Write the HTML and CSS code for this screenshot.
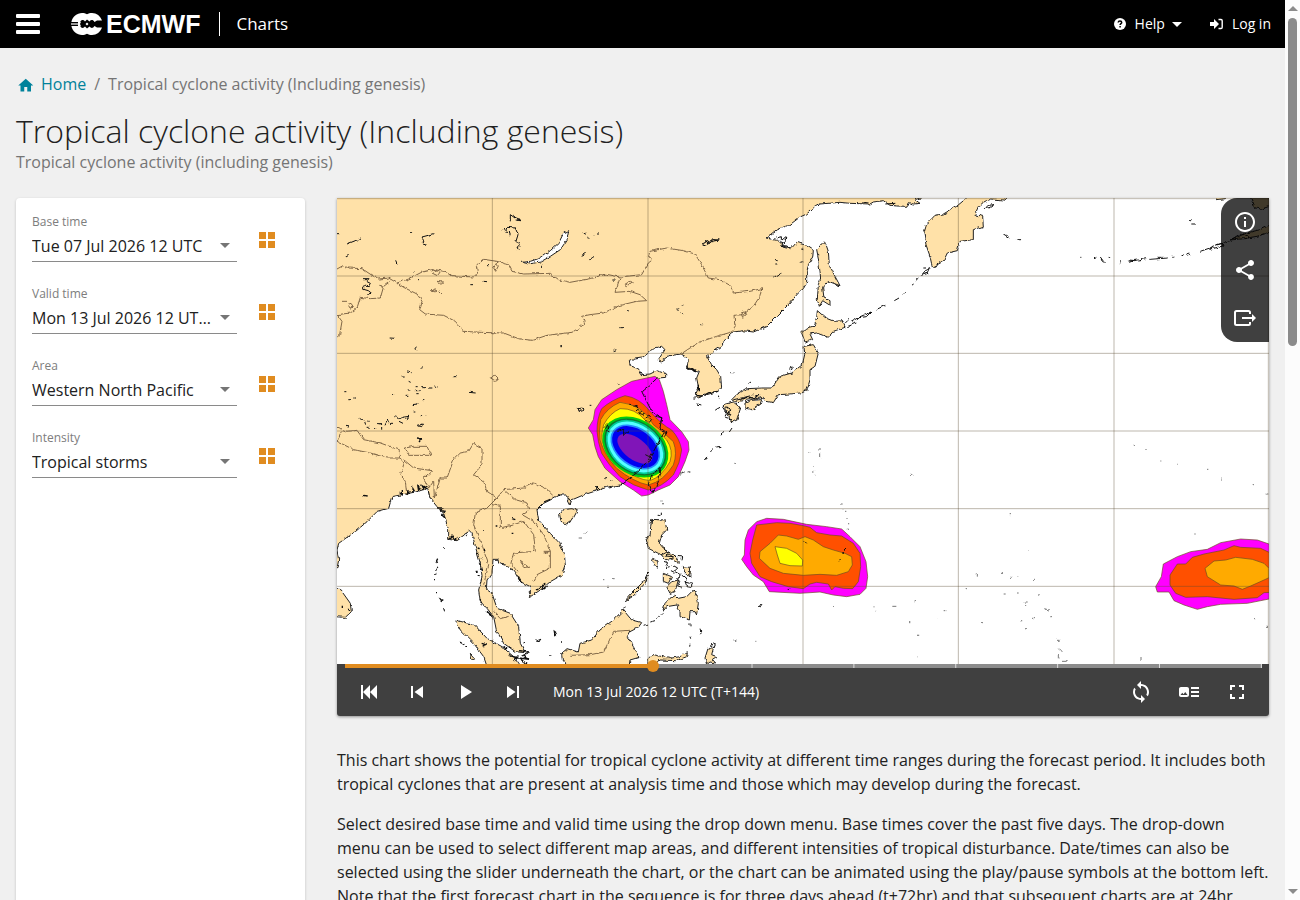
FILE: index.html
```html
<!DOCTYPE html>
<html lang="en">
<head>
  <meta charset="UTF-8">
  <meta name="viewport" content="width=device-width, initial-scale=1.0">
  <title>Tropical cyclone activity (Including genesis)</title>
  <link rel="stylesheet" href="styles.css">
</head>
<body>
  <div class="page">
    <header class="topbar">
      <button class="menu-button" type="button" aria-label="Menu"><span></span><span></span><span></span></button>
      <a class="logo" href="#">
        <svg width="32" height="22" viewBox="0 0 32 22" aria-hidden="true">
          <path fill="#fff" d="M11 0c2 0 3.500.4 5 1.200C17.500.4 19 0 21 0c4.600 0 8.500 3 10 7.500h-5L23.500 9c-1.500-2.500-3.500-2.500-5-.5L16 6.500l-2 2c-1.500-2-3.500-2-5 .5H.4C1.500 3.500 6 0 11 0zM11 22c2 0 3.500-.4 5-1.200 1.500.8 3 1.200 5 1.200 4.600 0 8.500-3 10-7.500h-5L23.500 13c-1.500 2.500-3.500 2.500-5 .5L16 15.500l-2-2c-1.500 2-3.500 2-5-.5H.4C1.500 18.500 6 22 11 22z"/>
          <path stroke="#fff" stroke-width="1.200" d="M0 11h9"/>
          <path fill="#fff" d="M14.500 11L16 9.500l1.500 1.500-1.500 1.500zM7 8.800h3l-1 2.200 1 2.200H7z"/>
        </svg>
        <span>ECMWF</span>
      </a>
      <a class="app-name" href="#">Charts</a>
      <nav class="user-nav">
        <button class="nav-item" type="button">
          <svg width="12" height="12" viewBox="0 0 12 12"><circle cx="6" cy="6" r="6" fill="#fff"/><path d="M4.200 4.500C4.300 2.600 7.700 2.600 7.700 4.500c0 1.200-1.600 1.200-1.600 2.500M6.100 8v1.500" fill="none" stroke="#000" stroke-width="1.500"/></svg>
          <span>Help</span>
          <i class="caret"></i>
        </button>
        <a class="nav-item" href="#">
          <svg width="13" height="12" viewBox="0 0 13 12"><path fill="#fff" d="M0 4h4V1l5 5-5 5V8H0z"/><path d="M8.500 1.500H11q1.200 0 1.200 1.200v6.600q0 1.200-1.200 1.200H8.500" fill="none" stroke="#fff" stroke-width="1.400"/></svg>
          <span>Log in</span>
        </a>
      </nav>
    </header>

    <main class="content">
      <nav class="breadcrumb">
        <a href="#"><svg width="18" height="18" viewBox="0 0 24 24"><path fill="currentColor" d="M11 22v-6h4v6h5v-8h3L13 5 3 14h3v8z"/></svg>Home</a>
        <span>/</span>
        <span>Tropical cyclone activity (Including genesis)</span>
      </nav>
      <h1>Tropical cyclone activity (Including genesis)</h1>
      <p class="subtitle">Tropical cyclone activity (including genesis)</p>

      <div class="columns">
        <form class="filters">
          <div class="filter">
            <div class="field">
              <label for="base">Base time</label>
              <select id="base"><option>Tue 07 Jul 2026 12 UTC</option></select>
            </div>
            <button class="grid-button" type="button" aria-label="All base times"><i></i><i></i><i></i><i></i></button>
          </div>
          <div class="filter">
            <div class="field">
              <label for="valid">Valid time</label>
              <select id="valid"><option>Mon 13 Jul 2026 12 UTC (T+144)</option></select>
            </div>
            <button class="grid-button" type="button" aria-label="All valid times"><i></i><i></i><i></i><i></i></button>
          </div>
          <div class="filter">
            <div class="field">
              <label for="area">Area</label>
              <select id="area"><option>Western North Pacific</option></select>
            </div>
            <button class="grid-button" type="button" aria-label="All areas"><i></i><i></i><i></i><i></i></button>
          </div>
          <div class="filter">
            <div class="field">
              <label for="intensity">Intensity</label>
              <select id="intensity"><option>Tropical storms</option></select>
            </div>
            <button class="grid-button" type="button" aria-label="All intensities"><i></i><i></i><i></i><i></i></button>
          </div>
        </form>

        <section class="main-column">
          <div class="player">
            <svg class="map" viewBox="0 0 2796 1398" role="img" aria-label="Western North Pacific tropical storm probability">
              <defs>
                <filter id="rough" x="0" y="0" width="100%" height="100%" color-interpolation-filters="sRGB">
                  <feTurbulence type="fractalNoise" baseFrequency="0.07" numOctaves="2" seed="4"/>
                  <feDisplacementMap in="SourceGraphic" scale="11" xChannelSelector="R" yChannelSelector="G"/>
                </filter>
              </defs>
              <rect width="2796" height="1398" fill="#fff"/>
              <g filter="url(#rough)">
              <!-- land -->
              <g class="land">
                <path d="M-20-20H1749V0L1734 5 1749 16 1729 18 1714 14 1709 25 1679 24 1659 22 1639 8 1609 12 1599 18 1539 16 1509 13 1449 18 1429 30 1409 48 1389 57 1359 80 1319 95 1287 120 1319 127 1339 145 1364 150 1379 133 1404 140 1419 150 1429 157 1427 180 1414 200 1409 225 1409 255 1399 272 1384 285 1354 320 1319 355 1289 385 1249 402 1219 398 1189 402 1164 425 1154 445 1129 462 1109 475 1124 500 1139 515 1151 535 1154 570 1144 580 1109 590 1084 600 1074 590 1084 565 1079 540 1087 520 1049 510 1054 485 1044 475 1032 468 999 473 969 492 964 485 984 455 974 445 949 450 934 465 914 480 894 483 877 490 879 503 904 512 914 530 939 528 959 518 989 528 989 538 961 540 939 560 914 580 924 600 944 640 974 660 969 690 984 700 974 716 949 761 934 786 904 821 849 861 809 868 779 878 739 891 704 906 699 921 690 904 690 891 665 891 640 906 620 916 600 936 605 966 640 1006 668 1036 682 1066 685 1101 675 1131 640 1151 610 1176 580 1196 580 1166 550 1151 535 1126 520 1106 485 1096 483 1084 468 1084 465 1126 450 1146 448 1174 465 1186 480 1231 520 1246 545 1286 550 1336 565 1364 535 1361 500 1336 478 1296 470 1256 450 1231 430 1211 425 1176 435 1136 430 1096 415 1046 405 1006 395 996 385 1011 360 1028 335 1024 335 996 320 946 300 926 280 901 272 871 240 881 190 891 165 896 155 931 120 941 90 971 55 1001 30 1018 5 1036 0 1056 5 1086 0 1112 -20 1112Z"/>
                <path d="M1889-9V0L1859 25 1819 48 1794 52 1769 78 1761 105 1767 140 1779 175 1786 208 1819 190 1831 165 1861 158 1869 130 1909 125 1909 95 1939 85 1937 55 1914 50 1924 25 1944 10 1964 3 1999 6 2019-9Z"/>
                <path d="M1459 132 1439 155 1444 180 1451 240 1444 260 1441 305 1447 325 1457 308 1479 322 1479 308 1461 300 1457 270 1474 250 1509 263 1494 235 1477 200 1474 160 1467 140Z"/>
                <path d="M1441 338 1464 358 1494 370 1519 368 1524 388 1489 400 1474 418 1439 405 1419 408 1427 425 1404 432 1394 405 1409 390 1431 385 1439 360Z"/>
                <path d="M1401 445 1429 440 1444 465 1434 505 1419 515 1419 545 1409 580 1389 585 1359 588 1324 590 1309 614 1289 610 1279 598 1239 605 1194 612 1184 605 1199 590 1229 572 1274 570 1304 570 1329 535 1364 525 1396 500 1403 470Z"/>
                <path d="M1224 615 1244 607 1274 605 1269 620 1244 635 1224 630ZM1159 620 1189 612 1211 630 1199 665 1184 672 1174 650 1165 635Z"/>
                <path d="M680 934 668 950 672 970 690 978 705 968 721 938 705 932Z"/>
                <path d="M944 964 941 986 939 1016 927 1021 934 1051 964 1066 999 1081 1024 1096 1022 1078 984 1056 967 1036 974 1011 989 996 984 966Z"/>
                <path d="M944 1081 964 1091 961 1111 949 1096ZM934 1131 914 1156 884 1186 862 1211 889 1194 924 1156ZM979 1126 1004 1136 994 1156 979 1150ZM1004 1151 1024 1146 1014 1181 999 1186 989 1166ZM1039 1106 1057 1108 1059 1136 1044 1126ZM974 1071 990 1062 1010 1080 985 1085Z"/>
                <path d="M1069 1176 1049 1196 1024 1201 1014 1191 999 1201 984 1216 977 1241 989 1226 1019 1221 1029 1236 1029 1256 1057 1266 1059 1241 1074 1241 1079 1251 1084 1216 1079 1191Z"/>
                <path d="M693 1420V1400L676 1386 674 1366 690 1352 724 1362 729 1336 764 1326 789 1296 829 1266 859 1236 884 1266 914 1274 904 1288 879 1301 871 1316 889 1346 906 1378 879 1386 874 1420Z"/>
                <path d="M931 1410 934 1381 954 1371 999 1381 1029 1376 1051 1361 1049 1376 1019 1388 969 1386 949 1410ZM1104 1380 1114 1348 1129 1351 1124 1370 1139 1376 1126 1384 1136 1395 1119 1392 1109 1400Z"/>
                <path d="M355 1266 370 1296 410 1336 440 1376 455 1420H560L530 1376 495 1346 450 1321 410 1278 385 1274ZM-9 1165 15 1181 40 1216 43 1241 25 1258 -9 1256ZM400 1366 415 1382 405 1386Z"/>
                <path d="M2629-5 2640 5 2665 2 2670-5ZM2739-5 2754 30 2774 33 2806 22V-5ZM2679 126 2729 105 2769 95 2806 78V100L2760 115 2720 122Z"/>
                <path class="lake" d="M695 98 680 105 665 135 640 158 610 180 580 190 553 193 575 198 610 192 640 175 670 155 690 125Z"/>
              </g>
              <!-- state borders -->
              <g class="borders">
                <path d="M0 213 18 203 35 210 75 212 105 232 125 243 155 240 180 255 215 243 255 222 290 214 330 222 345 233 410 237 422 225 418 205 440 184 480 190 515 200 525 220 560 228 640 226 665 245 699 253 769 240 804 228 849 237 914 230 934 195 947 185 934 175 939 160 989 150 1039 158 1074 168 1094 200 1114 240 1149 245 1179 262 1189 285 1239 280 1274 272 1269 295 1249 325 1219 350 1191 352 1194 385 1184 402 1139 415 1094 430 1059 450 1032 468"/>
                <path d="M180 255 200 268 240 288 255 310 248 335 265 348 320 352 355 370 380 400 430 403 500 405 545 422 585 427 630 412 705 403 744 378 734 355 759 350 799 345 849 322 899 310 929 308 909 290 879 280 834 283 849 240"/>
                <path d="M160 250 140 265 130 300 100 302 70 298 60 330 40 345 0 350 15 370 8 410 0 418"/>
                <path d="M0 688 30 700 60 697 80 725 130 735 190 757 190 780 150 780 100 765 50 755 0 730 15 700M205 750 230 745 270 745 282 772 215 772 205 750M190 780 200 800 190 830 205 850 210 890M200 785 230 810 285 818 260 840 275 870 290 850 292 900"/>
                <path d="M292 900 310 840 330 840 350 785 370 765 395 760 410 736 435 750 435 800 410 830 440 850 450 880 480 900 450 930 415 945 410 980 430 1030 455 1100 440 1160"/>
                <path d="M480 900 500 875 560 870 590 855 625 870 650 895M500 875 535 905 570 915 575 935 555 950 590 970 620 1010 640 1060 620 1065M465 920 490 925 490 990 530 980 560 970 590 1010 595 1060 530 1065 522 1095 540 1120M620 1060 640 1060 640 1110 600 1130 590 1150M470 1240 490 1262 515 1255M700 1372 760 1370 800 1362 830 1300 879 1297"/>
                <path d="M285 225l12-8 12 6-8 10zM300 250l20 2-8 7zM283 280l12-8v10zM305 278l10 10M30 320l12-4 8 12-14 2zM470 210l8-14 6 8-8 16zM458 538l14-6 12 12-12 3zM862 260l20-12 4 4-20 14zM1212 345l12-4 5 8-12 9zM550 1090l20 14 5 4-15-3zM15 310h12M130 262l10 2"/>
              </g>
              </g>
              <!-- storm probability contours -->
              <g class="contours">
                <path fill="#f0f" stroke="#90f" d="M954 535 929 540 884 550 839 575 794 605 774 635 769 665 754 690 767 710 774 746 784 776 804 811 849 851 889 876 914 894 934 891 964 876 999 861 1024 836 1044 791 1056 756 1054 731 1034 701 999 665 989 620 979 580 967 545Z"/>
                <path fill="#ff5000" d="M864 593Q824 605 794 632 780 660 780 700 782 730 794 766 814 800 849 836 889 865 934 876 974 868 1009 831 1030 795 1034 756 1028 721 1004 696 974 680 939 640 909 600 864 593Z"/>
                <path fill="#ffaa00" d="M849 613Q809 630 791 665 785 700 789 726 804 775 839 811 889 852 934 861 979 850 1009 801 1022 766 1009 731 979 701 949 680 919 620 849 613Z"/>
                <path fill="#ff0" d="M849 632Q819 645 800 680 792 710 796 730 809 775 849 806 899 845 939 848 974 836 999 791 1010 756 989 726 954 690 924 666 894 630 849 632Z"/>
                <g transform="translate(895 747) rotate(37)">
                  <ellipse fill="#0c1" rx="108" ry="81"/>
                  <ellipse fill="#087a30" rx="102" ry="75"/>
                  <ellipse fill="#0c9" rx="97" ry="71"/>
                  <ellipse fill="#5ff" rx="92" ry="66"/>
                  <ellipse fill="#28f" rx="83" ry="57"/>
                  <ellipse fill="#0000f0" rx="78" ry="52"/>
                  <ellipse fill="#8015b8" cx="2" cy="5" rx="61" ry="32"/>
                </g>
                <path fill="#f0f" stroke="#90f" d="M1289 961 1259 971 1234 996 1224 1026 1222 1071 1214 1084 1229 1106 1249 1131 1279 1151 1297 1181 1389 1186 1449 1182 1489 1191 1529 1196 1569 1189 1587 1171 1592 1136 1587 1091 1569 1046 1539 1016 1514 993 1469 986 1409 979 1339 964Z"/>
                <path fill="#ff5000" d="M1259 981 1247 1026 1239 1066 1244 1096 1269 1136 1304 1151 1354 1166 1399 1172 1419 1158 1439 1153 1474 1158 1484 1176 1494 1166 1519 1171 1547 1172 1564 1151 1571 1106 1569 1066 1549 1036 1514 1014 1479 1011 1439 1004 1419 988 1399 983 1359 976 1319 974Z"/>
                <path fill="#ffaa00" d="M1324 1011 1299 1036 1269 1061 1267 1081 1299 1111 1339 1126 1399 1132 1449 1129 1499 1132 1534 1121 1546 1101 1544 1076 1524 1066 1489 1056 1459 1046 1429 1026 1404 1016 1384 1024 1349 1014Z"/>
                <path fill="#ff0" d="M1314 1046 1349 1051 1379 1066 1397 1086 1396 1104 1359 1103 1329 1096 1321 1071Z"/>
                <path fill="#f0f" stroke="#90f" d="M2810 1038H2796L2761 1026 2711 1023 2651 1034 2611 1054 2561 1061 2521 1076 2479 1098 2473 1136 2456 1166 2461 1182 2496 1182 2511 1208 2541 1221 2581 1234 2611 1226 2651 1219 2731 1216 2796 1203H2810Z"/>
                <path fill="#ff5000" d="M2810 1063H2796L2771 1051 2711 1048 2691 1043 2661 1056 2601 1068 2566 1078 2546 1098 2521 1098 2499 1131 2499 1161 2516 1186 2546 1198 2611 1196 2691 1204 2761 1199 2781 1184 2810 1183Z"/>
                <path fill="#ffaa00" d="M2696 1078 2666 1086 2631 1089 2604 1111 2611 1136 2651 1161 2691 1164 2716 1174 2741 1164 2781 1146 2796 1139V1111L2781 1096 2746 1084Z"/>
              </g>
              <!-- coast seen through the contours, lakes, small islands -->
              <g class="coast" filter="url(#rough)">
                <path d="M961 540 939 560 914 580 924 600 944 640 974 660 969 690 984 700 974 716 949 761 934 786 904 821 849 861M969 808 944 831 934 861 947 886 961 856 971 826Z"/>
                <path d="M30 138 75 120M25 178l10-6M255 117l37-10M255 120l8 12-5 6 12 4M222 101h4M0 104h8M176 190l4 10M78 242l18 0-8 8 12 6-6 10-14-2 0 10 14 4 10 8-14 2M520 70v-20l14 10-4-8 20 16-14-2M497 96l12-6-4 12 14 2 0 8M510 88l25 2 8 20-6 20 10 10-6 10 6 8M158 420l16 1M236 446l4 16M440 250l10 1M400 260h8M245 245h4M226 222h4M450 200h6M613 205h5M670 443h5"/>
                <path d="M194 534h6M210 522l14 2M250 510h6M218 550l6 3M350 536h6M236 566h6M256 569h8M276 570h10M294 564l8 3M212 576h8M236 578h12M238 587h10M206 592h8M224 620l18-2M258 608h4M168 592h4M22 581h6M34 605h8M52 600h5M396 583l20 2M230 642h5M250 650h6M264 652h5M172 656l10 2M184 662l14-4M196 658l20-3-8 10-8-6M186 670l12 6M122 677l14 0-6 5M144 682l8-16 4 10M162 676h6M68 661l12 4M82 668l4 12M92 668l6 2M240 682l16-4-2 8-12-2M92 688h6M108 692h8M134 698v-8M24 682l12 2"/>
                <path d="M1097 132l16-4 4 8 10-12 20 2-22 4-12 8-14 6zM1105 126l8 10 10-14 4 12M734 172l12-6M757 185l14-6M740 105l6 4M752 120h6M768 110h6M780 108h6M826 246h10M873 338l6 1M850 389h8M1022 332l6 2M1031 344l5 3M1034 321h5M1090 380h6M830 458l8-3M842 558h6M758 622h5M724 632l12-2 2 8-12 2zM1309 240l24-14M1314 185h8M1315 198h6M1391 152l8 3M1391 192h8M1321 120l10-4 4 10 14-12-2 20-12 6-6-12M1330 142l20 2 10 8"/>
                <path d="M1520 380l16-16M1530 385l28-10M1545 370l20-12M1560 360l42-18-14 14zM1619 334l26-12M1672 308l14-8M1700 286l5-3M1724 262l6-4M1736 248l8-8M1753 232l12-14 14-6-6 14zM1759 210h8M1999 108l20 12M2039 122l14 5M1945 32l8-10 18-2-12 8zM1645 18l30-2M1575 12l20 3"/>
                <path d="M2268 182l10-4M2290 177l10 14 6 2M2315 178h6M2230 178h3M2350 196l4-6M2372 190l30-4 24-4M2376 186l20 2M2437 184l55-4M2460 178l14 0M2506 178h5M2530 174l10-4M2548 172l12-4M2590 160l40-14-12 8 40-10-4-8-30 10M2556 65h8M2566 78h8M2640 140l44-10M2683 124l30-18 20 8-8 10"/>
                <path d="M1165 618l-8 10 14 20-6 10 14 4M1135 636l14-8M1147 598l2-6M1185 690l-8 12M1189 605l30-6 30-8M1079 617l14 4M1069 600h6M1236 556l6-4M1183 524h6M1358 515l4-8 4 2-3 8M1150 745l-12 2M1128 752l-8 6M1112 776l-10 8 8-2zM1160 700l-8 12M1055 822h5M1030 828l12-4M975 908v4M975 918v4M973 944v8M962 952h8M975 1052l12 6 8 6-8 10 18 2M1010 1070l14 14-4 6M1020 1072l14 2-2 10M980 1090l12 4-8 16 14-4M1004 1100l18 10-10 10 18 10-8 14M1000 1120l12 6M1018 1140l10 10-6 14 14 4M1034 1128l16 14-6 10 14 4M1044 1150l6 16 12 2M1060 1150l8 18M1068 1176l8 4M920 1150l12-24 6-6M860 1234l5-8M920 1282l16-6M940 1272l14-4M958 1262l10-4M975 1250l4-4M1059 1276v6M1059 1316l2 6M1059 1340l-1 6M1089 1292l3 10-2 8M1267 1230l8-12M1190 1326h8M1124 1342l5-4 6 2-4 10z"/>
                <path class="heavy" d="M188 884l8 6 0-14M210 890l2-10 6 8M228 884l0-12 6 10M245 880l-3-20 8 14M262 876l-6-12 14 8M300 930l14 0-4 8 14 2-8 12 8 8M335 1024l10-10 8 12 8-6M422 1050l6 2M420 1066l8 0M432 1080l6 4M424 1096l8 4M416 1120l6 0M430 1112l4 6M422 1134l6 2M546 1358l30 4-20 12 20 10-30-4 24 18M515 1372l30 8M530 1392l14-20M500 1345l10 8M600 1176l24-20-10 22 18-14M544 1138l10 18M450 1240l16 14M428 1205l6 10M620 912l20-8M660 890l14 4M690 898l8 8M302 1082l-4 8 4 6M300 1106l-4 12M296 1124l0 6M292 1146v4M298 1182v4M312 1206h4M320 1230l2 10M306 1200l8 12M318 1050h3M368 1332l14 8M385 1346h5M434 1336l12 4-10 4M240 720l14 2-8 10M80 892l12 2M525 962l10 3M476 984h5M524 1006h5M438 996h4M443 1052v8M598 1330l14-6M560 1336l6-4M652 1300l8 6-6 6zM672 1332h5M640 1375h5M686 1358h4M16 1226v4M32 1234h4M1084 560v20M1076 592l20 2 20-10 26-4M1049 500l4 14 14-2 10 10M966 486l8 6M1402 582l6-10M1210 604l20-6 20 2 16-8M1168 626l10 8-4 12 8 6"/>
                <path d="M820 845l6 0M802 842h6M779 878v-12l10 10 6-8M840 700l20-6 0 20 12-12M800 690l10-10 6 10-8 8 10 4M880 622l24 4-8 8 20 4-10 8 14 4M926 660l10-6 8 10-8 10-8-6M955 655l20 4-4 14M974 700l16 4-8 12M925 770l20 10-12 10M1400 1030l6 6M1530 1050l-8 8M1512 1080l-6 10M1516 1066h5M1355 1174h5"/>
                <path class="faint" d="M1416 762h4M1446 750v8M1448 766v8M1448 774v4M1428 804v3M1429 820h3M1432 832h3M1722 832h4M1512 918h5M1518 930v4M1524 940h4M1530 960v4M1532 975v4M1534 992v4M2018 950h4M1918 1126v10M1992 1126h6M2022 1138h5M2038 1134h3M1886 1172h4M1730 1208h5M1666 1225h12M1611 1225v3M1612 1240h3M1820 1238h8M1716 1274h4M1798 1264h3M1932 1274h5M1742 1310v4M1742 1376v4M1488 1226h3M2000 1188h6M2040 1185h5M2060 1212h12M2064 1226l6-4M2085 1262l6-4M2054 1266v4M2068 1290v4M2122 1232l14 4M2140 1256h5M2160 1327h8M2167 1352l6 6M2167 1368v10M2175 1390l14 0M2392 738v4M2424 752h5M2470 789h3M2522 798h4M2610 814h4M2650 843h5M2750 860h4M2786 888h8M2572 1008h4M2748 1262h5M2787 1288h3M2412 1380v6M740 1006l10-4M725 1020h10M798 1145h4M810 1165h6M825 1142h8M1192 796h5M1255 1330h3M2074 1056h4M2091 1144h3M2104 1190h4"/>
              </g>
              <path class="grid" d="M466 0V1398M933 0V1398M1398 0V1398M1864 0V1398M2331 0V1398M2794 0V1398M0 2H2796M0 234H2796M0 466H2796M0 699H2796M0 932H2796M0 1165H2796"/>
            </svg>
            <div class="map-tools">
              <button type="button" aria-label="Information"><svg viewBox="0 0 24 24"><path d="M11 7h2v2h-2zm0 4h2v6h-2zm1-9C6.480 2 2 6.480 2 12s4.480 10 10 10 10-4.480 10-10S17.520 2 12 2zm0 18c-4.410 0-8-3.590-8-8s3.590-8 8-8 8 3.590 8 8-3.590 8-8 8z"/></svg></button>
              <button type="button" aria-label="Share"><svg viewBox="0 0 24 24"><path d="M18 16.080c-.76 0-1.440.3-1.960.77L8.910 12.700c.05-.23.09-.46.09-.7s-.04-.47-.09-.7l7.050-4.110c.54.5 1.250.81 2.040.81 1.660 0 3-1.340 3-3s-1.340-3-3-3-3 1.340-3 3c0 .24.04.47.09.7L8.040 9.810C7.500 9.310 6.790 9 6 9c-1.660 0-3 1.340-3 3s1.340 3 3 3c.79 0 1.500-.31 2.040-.81l7.120 4.160c-.05.21-.08.43-.08.65 0 1.610 1.310 2.920 2.920 2.920s2.920-1.310 2.920-2.920-1.310-2.920-2.920-2.920z"/></svg></button>
              <button type="button" aria-label="Export"><svg viewBox="0 0 24 24"><path d="M17 8V6.500Q17 5 15.500 5h-12Q2 5 2 6.500v11Q2 19 3.500 19h12q1.500 0 1.500-1.500V16M9 12h11" fill="none" stroke="#fff" stroke-width="2"/><path d="M19 8l4 4-4 4z"/></svg></button>
            </div>
            <div class="timeline"><input type="range" min="72" max="288" step="24" value="144" aria-label="Forecast step"></div>
            <div class="controls">
              <button type="button" aria-label="First"><svg viewBox="0 0 24 24"><path d="M4 5h2v14H4zM13 5v14l-7-7zM20 5v14l-7-7z"/></svg></button>
              <button type="button" aria-label="Previous"><svg viewBox="0 0 24 24"><path d="M6 6h2v12H6zm3.500 6l8.500 6V6z"/></svg></button>
              <button type="button" aria-label="Play"><svg viewBox="0 0 24 24"><path d="M8 5v14l11-7z"/></svg></button>
              <button type="button" aria-label="Next"><svg viewBox="0 0 24 24"><path d="M6 18l8.500-6L6 6v12zM16 6v12h2V6h-2z"/></svg></button>
              <span class="step-label">Mon 13 Jul 2026 12 UTC (T+144)</span>
              <button type="button" aria-label="Loop"><svg viewBox="0 0 24 24"><path d="M12 4V1L8 5l4 4V6c3.310 0 6 2.690 6 6 0 1.010-.25 1.970-.7 2.800l1.460 1.460C19.540 15.030 20 13.570 20 12c0-4.420-3.580-8-8-8zm0 14c-3.310 0-6-2.690-6-6 0-1.010.25-1.970.7-2.800L5.240 7.740C4.460 8.970 4 10.430 4 12c0 4.420 3.580 8 8 8v3l4-4-4-4v3z"/></svg></button>
              <button type="button" aria-label="Legend"><svg viewBox="0 0 24 24"><path d="M22 13h-8v-2h8v2zm0-6h-8v2h8V7zm-8 10h8v-2h-8v2zm-2-8v6c0 1.100-.9 2-2 2H4c-1.100 0-2-.9-2-2V9c0-1.100.9-2 2-2h6c1.100 0 2 .9 2 2zm-1.500 6l-2.250-3-1.750 2.260-1.250-1.510L3.500 15h7z"/></svg></button>
              <button type="button" aria-label="Full screen"><svg viewBox="0 0 24 24"><path d="M7 14H5v5h5v-2H7v-3zm-2-4h2V7h3V5H5v5zm12 7h-3v2h5v-5h-2v3zM14 5v2h3v3h2V5h-5z"/></svg></button>
            </div>
          </div>

          <div class="description">
            <p>This chart shows the potential for tropical cyclone activity at different time ranges during the forecast period. It includes both tropical cyclones that are present at analysis time and those which may develop during the forecast.</p>
            <p>Select desired base time and valid time using the drop down menu. Base times cover the past five days. The drop-down menu can be used to select different map areas, and different intensities of tropical disturbance. Date/times can also be selected using the slider underneath the chart, or the chart can be animated using the play/pause symbols at the bottom left. Note that the first forecast chart in the sequence is for three days ahead (t+72hr) and that subsequent charts are at 24hr</p>
          </div>
        </section>
      </div>
    </main>
  </div>
  <div class="scrollbar" aria-hidden="true">
    <i class="up"></i>
    <div class="track"><div class="thumb"></div></div>
    <i class="down"></i>
  </div>
</body>
</html>
```
FILE: styles.css
```css
* {
  box-sizing: border-box;
}
body {
  margin: 0;
  display: flex;
  height: 100vh;
  overflow: hidden;
  background: #f0f0f0;
  color: #212121;
  font-family: "Open Sans", "Noto Sans", sans-serif;
  font-size: 16px;
  line-height: 24px;
}
button {
  background: none;
  border: 0;
  padding: 0;
  font: inherit;
  color: inherit;
  cursor: pointer;
}
a {
  text-decoration: none;
  color: inherit;
}
.page {
  flex: 1;
  min-width: 0;
  overflow: hidden;
}

/* top bar */
.topbar {
  display: flex;
  align-items: center;
  height: 48px;
  padding: 0 14px 0 16px;
  background: #000;
  color: #fff;
}
.menu-button {
  display: flex;
  flex-direction: column;
  gap: 4px;
  width: 24px;
  margin-right: 31px;
}
.menu-button span {
  height: 4px;
  border-radius: 1px;
  background: #fff;
}
.logo {
  display: flex;
  align-items: center;
  gap: 3px;
  padding-right: 19px;
  border-right: 1px solid #fff;
  font: bold 25px/24px "Liberation Sans", sans-serif;
}
.app-name {
  margin-left: 16px;
  font-size: 17px;
}
.user-nav {
  display: flex;
  gap: 28px;
  margin-left: auto;
  font-size: 14px;
}
.nav-item {
  display: flex;
  align-items: center;
  gap: 9px;
}
.caret {
  border: 5px solid transparent;
  border-top-color: #fff;
  border-bottom: 0;
  margin-left: -2px;
}

/* heading */
.content {
  padding: 24px 16px 0;
}
.breadcrumb {
  display: flex;
  gap: 8px;
  color: #757575;
}
.breadcrumb a {
  display: flex;
  align-items: center;
  gap: 7px;
  color: #00829b;
}
h1 {
  margin: 16px 0 0;
  font-size: 32px;
  font-weight: 300;
  line-height: 38px;
}
.subtitle {
  margin: 0 0 24px;
  line-height: 24px;
  color: #757575;
}
.columns {
  display: grid;
  grid-template-columns: 289px minmax(0, 1fr);
  gap: 32px;
}

/* filters */
.filters {
  padding: 0 16px;
  background: #fff;
  border-radius: 4px;
  box-shadow: 0 1px 3px rgba(0, 0, 0, 0.2);
}
.filter {
  display: flex;
  align-items: flex-start;
  gap: 22px;
  height: 72px;
  padding-top: 16px;
}
.field {
  width: 205px;
  border-bottom: 1px solid #8a8a8a;
}
.field label {
  display: block;
  font-size: 12px;
  line-height: 16px;
  color: #7d7d7d;
}
.field select {
  display: block;
  width: 100%;
  height: 31px;
  padding: 0 24px 0 0;
  border: 0;
  appearance: none;
  color: #212121;
  font: inherit;
  text-overflow: ellipsis;
  background: url("data:image/svg+xml,%3Csvg xmlns='http://www.w3.org/2000/svg' width='10' height='5'%3E%3Cpath d='M0 0h10L5 5z' fill='%23757575'/%3E%3C/svg%3E") no-repeat right 7px center;
}
.grid-button {
  display: grid;
  grid-template-columns: 7px 7px;
  grid-auto-rows: 7px;
  gap: 2px;
  margin-top: 18px;
}
.grid-button i {
  background: #e08c20;
}

/* chart player */
.player {
  position: relative;
  border-radius: 0 0 3px 3px;
  background: #404040;
  box-shadow: 0 1px 3px rgba(0, 0, 0, 0.4);
}
.map {
  display: block;
  width: 100%;
}
.land path {
  fill: #ffe1a8;
  stroke: #222;
  stroke-width: 3;
}
.land .lake {
  fill: #fff;
}
.borders path {
  fill: none;
  stroke: #806747;
  stroke-width: 3;
}
.contours path {
  stroke: #6b4b20;
  stroke-width: 2;
  stroke-linejoin: round;
}
.coast path {
  fill: none;
  stroke: #111;
  stroke-width: 3;
}
.coast .heavy {
  stroke-width: 4;
}
.coast .faint {
  stroke: #777;
}
.grid {
  fill: none;
  stroke: #5a4a32;
  stroke-opacity: 0.4;
  stroke-width: 3;
}
.map-tools {
  position: absolute;
  top: 0;
  right: 0;
  display: flex;
  flex-direction: column;
  background: rgba(0, 0, 0, 0.75);
  border-radius: 16px 0 0 16px;
}
.map-tools button,
.controls button {
  display: flex;
  align-items: center;
  justify-content: center;
  width: 48px;
  height: 48px;
}
.map-tools svg,
.controls svg {
  width: 24px;
  height: 24px;
  fill: #fff;
}
.timeline {
  padding: 0 7px 0 8px;
}
.timeline input {
  display: block;
  appearance: none;
  width: 100%;
  height: 4px;
  margin: 0;
  background:
    linear-gradient(90deg, #e08c20 34%, transparent 34%),
    linear-gradient(90deg, transparent calc(100% - 1px), #ddd 0) 0 0 / calc(100% / 9) 100%,
    linear-gradient(#8c8c8c, #8c8c8c);
}
.timeline input::-webkit-slider-thumb {
  appearance: none;
  width: 12px;
  height: 12px;
  border-radius: 50%;
  background: #e08c20;
}
.controls {
  display: flex;
  align-items: center;
  height: 48px;
  padding: 0 8px;
  color: #fff;
}
.step-label {
  flex: 1;
  padding-left: 16px;
  font-size: 14px;
}
.description {
  padding-top: 32px;
}
.description p {
  margin: 0 0 16px;
}

/* page scrollbar */
.scrollbar {
  display: flex;
  flex-direction: column;
  align-items: center;
  width: 15px;
  padding: 6px 0;
  background: #fcfcfc;
}
.scrollbar .track {
  flex: 1;
  padding: 7px 0;
}
.scrollbar .thumb {
  width: 9px;
  height: 38%;
  border-radius: 5px;
  background: #8b8b8b;
}
.scrollbar .up,
.scrollbar .down {
  border: 5px solid transparent;
}
.scrollbar .up {
  border-top: 0;
  border-bottom-color: #8b8b8b;
}
.scrollbar .down {
  border-bottom: 0;
  border-top-color: #8b8b8b;
}
```
